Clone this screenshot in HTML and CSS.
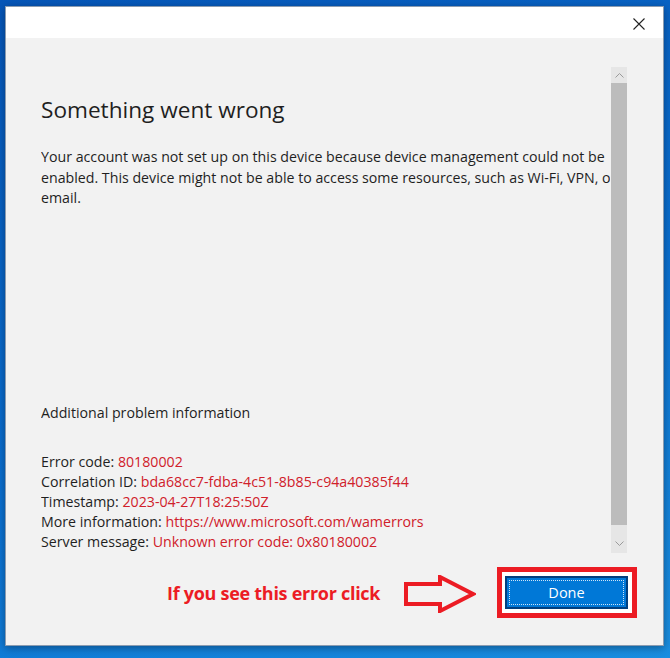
FILE: index.html
```html
<!DOCTYPE html>
<html lang="en">

<head>
    <meta charset="UTF-8">
    <meta name="viewport" content="width=device-width, initial-scale=1.0">
    <title>Something went wrong</title>
    <link rel="stylesheet" href="styles.css">
</head>

<body>
    <div class="window">
        <div class="title-bar">
            <svg class="close" width="12" height="12" viewBox="0 0 12 12">
                <path d="M0.5 0.5 L11.5 11.5 M11.5 0.5 L0.5 11.5" stroke="#222" stroke-width="1.1" fill="none" />
            </svg>
        </div>
        <div class="main">
            <div class="scroll-area">
                <div class="content">
                    <h1>Something went wrong</h1>
                    <p class="intro">Your account was not set up on this device because device management could not be enabled. This device might not be able to access some resources, such as Wi-Fi, VPN, or email.</p>
                    <p class="extra">Additional problem information</p>
                    <ul class="details">
                        <li>Error code: <span class="val">80180002</span></li>
                        <li>Correlation ID: <span class="val">bda68cc7-fdba-4c51-8b85-c94a40385f44</span></li>
                        <li>Timestamp: <span class="val">2023-04-27T18:25:50Z</span></li>
                        <li>More information: <span class="val">https://www.microsoft.com/wamerrors</span></li>
                        <li>Server message: <span class="val">Unknown error code: 0x80180002</span></li>
                    </ul>
                </div>
                <div class="scrollbar">
                    <div class="arrow-btn up">
                        <svg width="9" height="5" viewBox="0 0 9 5"><path d="M0.5 4.5 L4.5 0.5 L8.5 4.5" stroke="#9a9a9a" fill="none" /></svg>
                    </div>
                    <div class="thumb"></div>
                    <div class="arrow-btn down">
                        <svg width="9" height="5" viewBox="0 0 9 5"><path d="M0.5 0.5 L4.5 4.5 L8.5 0.5" stroke="#9a9a9a" fill="none" /></svg>
                    </div>
                </div>
            </div>
            <div class="footer">
                <p class="hint">If you see this error click</p>
                <svg class="pointer" width="72" height="38" viewBox="0 0 72 38">
                    <path d="M2 9 L36 9 L36 2 L69 19 L36 36 L36 29 L2 29 Z" stroke="#ec1c24" stroke-width="4" stroke-linejoin="miter" fill="none" />
                </svg>
                <div class="highlight">
                    <button class="done"><span>Done</span></button>
                </div>
            </div>
        </div>
    </div>
</body>

</html>
```

FILE: styles.css
```css
* {
    margin: 0px;
    padding: 0px;
    box-sizing: border-box;
}

body {
    width: 670px;
    height: 658px;
    overflow: hidden;
    background: linear-gradient(160deg, #0656b8 0%, #0a6fd0 55%, #1a8ee0 100%);
    font-family: "Open Sans", "Noto Sans", sans-serif;
    padding: 6px 6px 0px 5px;
}

.window {
    width: 659px;
    height: 640px;
    background-color: #f2f2f2;
    border: 1px solid #8a9bb0;
    box-shadow: 0px 2px 8px rgba(0, 0, 0, 0.35);
    display: flex;
    flex-direction: column;
}

.title-bar {
    height: 31px;
    background-color: #ffffff;
    display: flex;
    justify-content: flex-end;
    align-items: center;
    padding-right: 18px;
    flex-shrink: 0;
}

.close {
    margin-top: 2px;
}

.main {
    flex: 1;
    display: flex;
    flex-direction: column;
    padding-top: 29px;
}

.scroll-area {
    height: 486px;
    display: flex;
}

.content {
    width: 569px;
    margin-left: 35px;
    overflow: hidden;
    color: #1f1f1f;
    font-size: 14.2px;
}

h1 {
    font-weight: 400;
    font-size: 22.6px;
    line-height: 32px;
    margin-top: 27px;
    color: #1f1f1f;
    white-space: nowrap;
}

.intro {
    width: 600px;
    line-height: 20.5px;
    margin-top: 21px;
}

.extra {
    line-height: 20px;
    margin-top: 194px;
}

.details {
    list-style: none;
    margin-top: 29px;
    line-height: 20.2px;
    white-space: nowrap;
}

.val {
    color: #d0202a;
}

.scrollbar {
    width: 16px;
    margin-left: 1px;
    display: flex;
    flex-direction: column;
}

.arrow-btn {
    background-color: #e6e6e6;
    display: flex;
    justify-content: center;
}

.arrow-btn.up {
    height: 16px;
    align-items: center;
}

.arrow-btn.down {
    height: 28px;
    align-items: flex-end;
    padding-bottom: 7px;
}

.thumb {
    flex: 1;
    background-color: #bcbcbc;
}

.footer {
    display: flex;
    align-items: center;
    padding-top: 14px;
    padding-left: 161px;
    padding-right: 26px;
}

.hint {
    color: #ec1c24;
    font-weight: 700;
    font-size: 18px;
    letter-spacing: -0.28px;
}

.pointer {
    margin-left: 24px;
    margin-top: 2px;
}

.highlight {
    margin-left: auto;
    border: 5px solid #ec1c24;
    background-color: #ffffff;
    padding: 4px 4px 4px 3px;
}

.done {
    width: 123px;
    height: 33px;
    background-color: #0078d7;
    border: 2px solid #003f7f;
    color: #ffffff;
    font-family: "Open Sans", "Noto Sans", sans-serif;
    font-size: 14.5px;
    padding: 2px;
    display: flex;
}

.done span {
    flex: 1;
    border: 1px dotted #cfe4f7;
    display: flex;
    justify-content: center;
    align-items: center;
}
```
